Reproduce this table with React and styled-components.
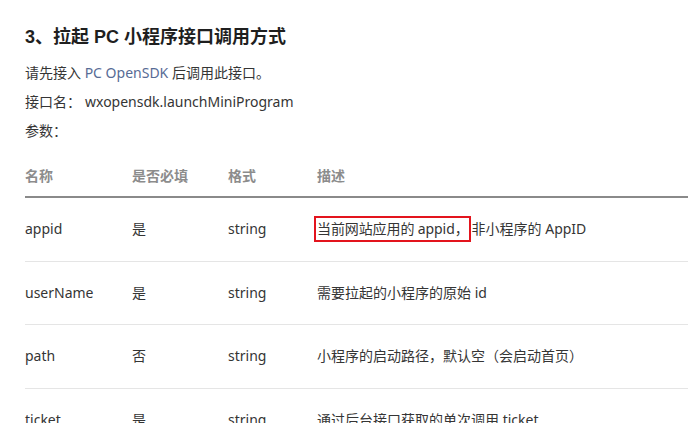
import React from 'react';
import styled, { createGlobalStyle } from 'styled-components';

const GlobalStyle = createGlobalStyle`
    html, body {
        margin: 0;
        padding: 0;
        background: #fff;
        overflow: hidden;
    }
    body {
        font-family: "Noto Sans", "Noto Sans CJK SC", sans-serif;
        color: #353535;
    }
`;

const Page = styled.div`
    padding: 24px 0 0 25px;
    width: 720px;
`;

const Heading = styled.h3`
    margin: 0 0 8px;
    font-family: "Liberation Sans", "Noto Sans CJK SC", sans-serif;
    font-size: 18px;
    line-height: 26px;
    font-weight: bold;
    color: #1f1f1f;
`;

const Line = styled.p`
    margin: 0;
    font-size: 14px;
    line-height: 29px;
`;

const Link = styled.a`
    color: #576b95;
    text-decoration: none;
`;

const Code = styled.span`
    margin-left: 4px;
`;

const Table = styled.table`
    margin-top: 10px;
    width: 720px;
    border-collapse: collapse;
    table-layout: fixed;
    font-size: 14px;
`;

const Th = styled.th`
    text-align: left;
    font-weight: bold;
    color: #8c8c8c;
    line-height: 20px;
    padding: 11px 0 10px;
    border-bottom: 2px solid #8a8a8a;
    width: ${p => p.$w || 'auto'};
`;

const Td = styled.td`
    line-height: 20px;
    padding: 21px 0 21.5px;
    border-bottom: 1px solid #e5e5e5;
    color: #353535;
    white-space: nowrap;
`;

const Marked = styled.span`
    display: inline-block;
    line-height: 22px;
    border: 2px solid #e3141d;
    padding: 0 0 0 1px;
    margin: -3px 1px -3px -3px;
    letter-spacing: -0.1px;
`;

const rows = [
    { name: 'appid', must: '是', type: 'string', desc: <><Marked>当前网站应用的 appid，</Marked>非小程序的 AppID</> },
    { name: 'userName', must: '是', type: 'string', desc: '需要拉起的小程序的原始 id' },
    { name: 'path', must: '否', type: 'string', desc: '小程序的启动路径，默认空（会启动首页）' },
    { name: 'ticket', must: '是', type: 'string', desc: '通过后台接口获取的单次调用 ticket' },
];

const App = () => {
    return (
        <>
            <GlobalStyle />
            <Page>
                <Heading>3、拉起 PC 小程序接口调用方式</Heading>
                <Line>请先接入 <Link href="#">PC OpenSDK</Link> 后调用此接口。</Line>
                <Line>接口名：<Code>wxopensdk.launchMiniProgram</Code></Line>
                <Line>参数：</Line>
                <Table>
                    <thead>
                        <tr>
                            <Th $w="107px">名称</Th>
                            <Th $w="96px">是否必填</Th>
                            <Th $w="89px">格式</Th>
                            <Th>描述</Th>
                        </tr>
                    </thead>
                    <tbody>
                        {rows.map(r => (
                            <tr key={r.name}>
                                <Td>{r.name}</Td>
                                <Td>{r.must}</Td>
                                <Td>{r.type}</Td>
                                <Td>{r.desc}</Td>
                            </tr>
                        ))}
                    </tbody>
                </Table>
            </Page>
        </>
    );
};

export default App;
